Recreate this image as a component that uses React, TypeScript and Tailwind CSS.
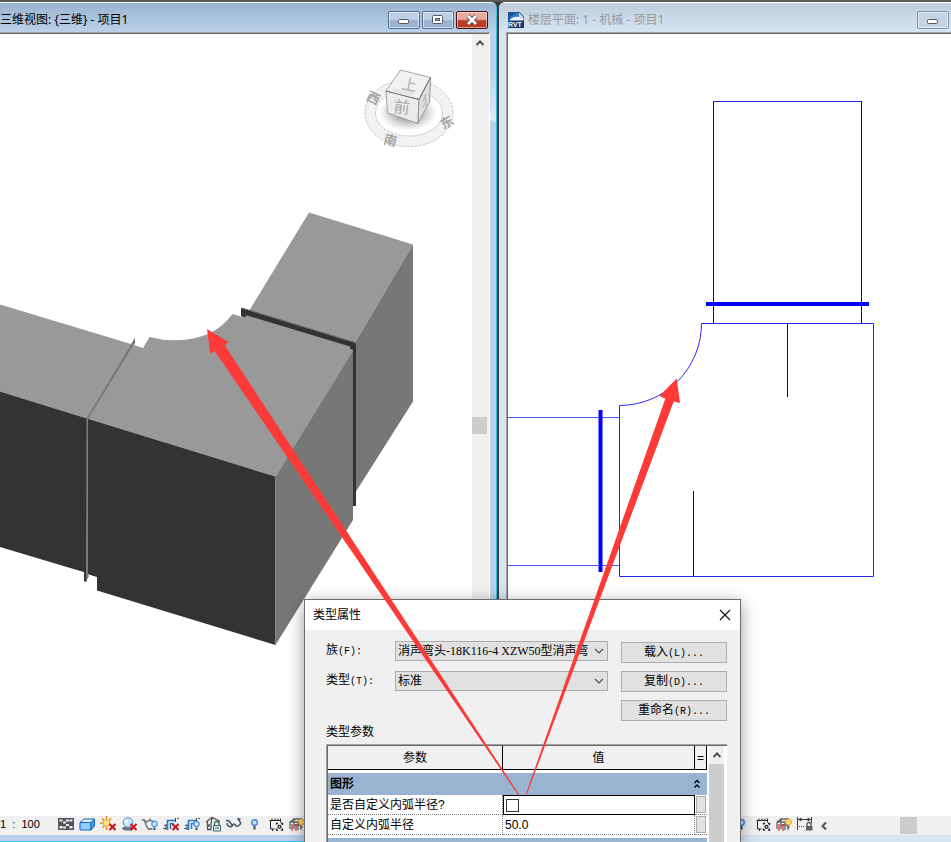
import { ReactNode, useState } from "react";
import clsx from "clsx";

const cjk = "font-['Liberation_Sans','Noto_Sans_CJK_SC',sans-serif]";

function RedCross() {
  return <path d="M9.5 8l6 6M15.5 8l-6 6" stroke="#d01212" strokeWidth="2" />;
}

function SmallBulb() {
  return (
    <>
      <circle cx="12.5" cy="8" r="2.8" fill="#b8e4ff" stroke="#2a78d0" />
      <path d="M11.5 11.5h2v2.5h-2z" fill="#3a4a5c" />
    </>
  );
}

function DuctRun() {
  return (
    <>
      <path d="M0 12.5h3M1 9.5h2M14 2.5h2" fill="none" stroke="#4b5661" strokeWidth="1.2" />
      <path d="M4.5 14V4.5H13M7.5 13V7.500h3" fill="none" stroke="#2f78b8" strokeWidth="1.6" />
      <path d="M3 8v6M12.500 2v4" stroke="#39434d" />
    </>
  );
}

const icons: Record<string, { label: string; drawing: ReactNode }> = {
  detail: {
    label: "详细程度",
    drawing: (
      <>
        <rect x="0" y="2" width="16" height="12" fill="#50555c" />
        <path d="M1.5 3.5h3v2h-3zM11.5 3.5h3v2h-3zM5 5.5h3v2H5zM8 8h3v2H8zM1.5 10h3v2.5h-3zM11.5 10h3v2.5h-3zM5 10.5h3v2H5zM8 3.5h3v2H8z" fill="#e8eaec" />
      </>
    ),
  },
  style: {
    label: "视觉样式",
    drawing: (
      <g stroke="#1565b8" strokeLinejoin="round">
        <path d="M1 6.5L5 3h10.5L12 6.5z" fill="#d9f1ff" />
        <path d="M1 6.5h11V14H1z" fill="#8fd0fa" />
        <path d="M12 6.5L15.5 3v7L12 14z" fill="#4aa3e8" />
      </g>
    ),
  },
  sun: {
    label: "日光路径",
    drawing: (
      <>
        <path d="M6.5 0v3M0 7h2.5M2 2.5l2 2M11 2.5l-2 2M2.5 11.5l2-2M6.5 11v3" stroke="#d98a12" strokeWidth="1.4" />
        <circle cx="6.5" cy="7" r="3.4" fill="#ffe58a" stroke="#eda21c" />
        <RedCross />
      </>
    ),
  },
  shadow: {
    label: "阴影",
    drawing: (
      <>
        <ellipse cx="7" cy="12.5" rx="6" ry="2" fill="#6a727c" />
        <circle cx="7" cy="6.5" r="4.8" fill="#c4e6fb" stroke="#5591c8" />
        <circle cx="5.5" cy="5" r="1.6" fill="#fff" />
        <RedCross />
      </>
    ),
  },
  render: {
    label: "渲染对话框",
    drawing: (
      <>
        <path d="M0 4h2.500l1.500 5 2.500 4h4M4 6.500c1-2.500 7-2.500 8 0M8 2.500v2" fill="none" stroke="#59616b" strokeWidth="1.3" />
        <SmallBulb />
      </>
    ),
  },
  crop: {
    label: "裁剪视图",
    drawing: (
      <>
        <DuctRun />
        <RedCross />
      </>
    ),
  },
  region: {
    label: "裁剪区域",
    drawing: (
      <>
        <DuctRun />
        <SmallBulb />
      </>
    ),
  },
  lock3d: {
    label: "锁定三维视图",
    drawing: (
      <>
        <path d="M1 6l6-4.5L14 5v4M2.500 6v7.500h4M7 2l-1 6v5M4 8v3" fill="none" stroke="#4a5158" strokeWidth="1.3" />
        <path d="M9.500 9V7.500a2 2 0 0 1 4 0" fill="none" stroke="#3f6f68" strokeWidth="1.300" />
        <path d="M8.500 9.500h7V15h-7z" fill="#d5ebe4" stroke="#356c62" />
        <path d="M10 12h4" stroke="#356c62" />
      </>
    ),
  },
  glasses: {
    label: "临时隐藏/隔离",
    drawing: (
      <path d="M0 4.500l3 .5 3 4M1 7c0 4 5 5 6 1.500 1-1 1.500-.5 2 0 1 3 6 1.500 5.500-2L12 3h2.500" fill="none" stroke="#3e4d5e" strokeWidth="1.400" />
    ),
  },
  bulb: {
    label: "显示隐藏的图元",
    drawing: (
      <>
        <circle cx="7.500" cy="6.500" r="2.800" fill="#b8e4ff" stroke="#2a78d0" strokeWidth="1.200" />
        <path d="M6.500 10h2v3.500h-2z" fill="#3a4a5c" />
      </>
    ),
  },
  temp: {
    label: "临时视图属性",
    drawing: (
      <>
        <path d="M1.500 4.500h11v2M2.500 4v9h4M4 2.500v2M7 2.500v2M10 2.500v2M12.500 2.500v2M4.500 13v2" fill="none" stroke="#20252a" />
        <path d="M8.500 8.500v-1h1.500M13 7.500h1.500V9M14.500 12.500V14H13M10 14H8.500v-1.500" fill="none" stroke="#20252a" strokeWidth="1.300" />
        <circle cx="11.500" cy="10.800" r="1.500" fill="none" stroke="#20252a" strokeWidth="1.300" />
      </>
    ),
  },
  analytic: {
    label: "分析模型",
    drawing: (
      <>
        <path d="M1 13V6l4-3h8M1 6h8M5 3v10M9 6v8M12 8v6M5 9h7" fill="none" stroke="#5c636b" strokeWidth="1.300" />
        <path d="M3 8v7M7 8v7" stroke="#c93a32" strokeWidth="1.300" />
        <circle cx="12.500" cy="6" r="3" fill="#ffd76a" stroke="#ee9a1a" />
        <path d="M11.500 10h2v2h-2z" fill="#53606e" />
      </>
    ),
  },
  constraint: {
    label: "显示约束",
    drawing: (
      <>
        <path d="M0 3.500h15M.5 1v13M14.500 1v6M2 3.500l2-1.500v3zM13 3.500L11 2v3z" fill="#3a4047" stroke="#3a4047" />
        <path d="M2 10.500h6" stroke="#3a4047" strokeDasharray="1 1" />
        <path d="M10 10V8.500a2 2 0 0 1 4 0V10" fill="none" stroke="#4c5258" strokeWidth="1.300" />
        <path d="M9 10h6.500v4.500H9z" fill="#5d6369" />
      </>
    ),
  },
};

const icons3d = ["detail", "style", "sun", "shadow", "render", "crop", "region", "lock3d", "glasses", "bulb", "temp", "analytic"];
const iconsPlan = ["detail", "style", "sun", "shadow", "crop", "region", "glasses", "bulb", "temp", "analytic", "constraint"];

function ViewControls({ names }: { names: string[] }) {
  return (
    <div className="flex h-[19px] shrink-0 items-center bg-[#f0f0f0] pb-[3px]">
      <span className="w-[55px] shrink-0 whitespace-pre font-['Liberation_Sans',sans-serif] text-[11px] leading-4">1  :  100</span>
      {names.map((name) => (
        <button key={name} type="button" aria-label={icons[name].label} className="flex w-[21px] shrink-0 justify-center">
          <svg viewBox="0 0 16 16" className="size-4">{icons[name].drawing}</svg>
        </button>
      ))}
    </div>
  );
}

function CaptionButton({ kind, active }: { kind: "min" | "max" | "close"; active: boolean }) {
  return (
    <button
      type="button"
      aria-label={kind}
      className={clsx(
        "flex h-[18px] w-8 shrink-0 items-center justify-center rounded-[2px] border inset-shadow-[0_0_0_1px_rgba(255,255,255,0.5)]",
        kind === "close" && "border-[#4b1319] bg-linear-to-b from-[#e9a99b] from-45% to-[#bb3f27] to-55%",
        kind !== "close" && active && "border-[#54708f] bg-linear-to-b from-[#bcd0e6] from-45% to-[#98b4d2] to-55%",
        kind !== "close" && !active && "border-[#8294ab] bg-[#c6d3e1]"
      )}
    >
      <svg viewBox="0 0 30 16" className="h-4 w-[30px]">
        {kind === "min" && <rect x="9.500" y="7.500" width="10" height="4" rx="1" fill="#fff" stroke="#535666" />}
        {kind === "max" && (
          <>
            <rect x="9.500" y="3.500" width="10" height="8" rx="1" fill="#fff" stroke="#535666" />
            <rect x="12.500" y="6.500" width="4" height="2" fill="#9cb6d3" stroke="#535666" />
          </>
        )}
        {kind === "close" && (
          <>
            <path d="M11 4l8 8M19 4l-8 8" stroke="#4d4a5a" strokeWidth="4.500" />
            <path d="M11 4l8 8M19 4l-8 8" stroke="#fff" strokeWidth="2.600" />
          </>
        )}
      </svg>
    </button>
  );
}

function Chevron({ d, className }: { d: string; className?: string }) {
  return (
    <svg viewBox="0 0 10 10" className={clsx("size-[10px]", className)}>
      <path d={d} fill="none" stroke="#505050" strokeWidth="2" />
    </svg>
  );
}

function ViewCube() {
  return (
    <g className={cjk}>
      <defs>
        <radialGradient id="cubeShadow">
          <stop offset="0.3" stopColor="#777" stopOpacity="0.7" />
          <stop offset="1" stopColor="#999" stopOpacity="0" />
        </radialGradient>
      </defs>
      <ellipse cx="409" cy="113" rx="38.500" ry="28" fill="none" stroke="#f2f2f2" strokeWidth="10" />
      <ellipse cx="409" cy="113" rx="44" ry="33.500" fill="none" stroke="#c2c2c2" strokeDasharray="3 1" />
      <ellipse cx="409" cy="113" rx="33.500" ry="23" fill="none" stroke="#c8c8c8" strokeDasharray="3 1" />
      <ellipse cx="408" cy="113" rx="29" ry="18" fill="url(#cubeShadow)" />
      <path d="M400.500 70L430.500 77.500 419 99.500 386 91z" fill="#f1f1f1" stroke="#a5a5a5" />
      <path d="M386 91L419 99.500 418 123.500 387.500 113z" fill="#ebebeb" stroke="#a0a0a0" />
      <path d="M419 99.500L430.500 77.500 429.500 102 418 123.500z" fill="#dedede" stroke="#969696" />
      <path d="M386 91L419 99.500 430.500 77.500" fill="none" stroke="#777" />
      <path d="M394 88l20 5 -2 4 -20-5z" fill="#e2e4e7" />
      <text x="402" y="90" fontSize="15" fill="#a9a9a9" transform="rotate(12 408 84)">上</text>
      <text x="394" y="113" fontSize="16" fill="#a6a6a6" transform="rotate(6 402 106)">前</text>
      <path d="M423 101l4-8M423 107l4-8M424 112l3-5M425 95l1 12" stroke="#aaa" strokeDasharray="2 1" />
      <g fontSize="13" fontWeight="bold" fill="#a4a4a4">
        <text x="367" y="103" transform="rotate(25 374 98)">西</text>
        <text x="384" y="145" transform="rotate(15 390 140)">南</text>
        <text x="440" y="127" transform="rotate(-30 447 122)">东</text>
      </g>
    </g>
  );
}

function DuctModel() {
  return (
    <svg viewBox="0 34 472 782" className="h-[782px] w-[472px] shrink-0">
      <ViewCube />
      {/* branch duct */}
      <path d="M309 212.500L413 244.500 354 345 249 311z" fill="#999" />
      <path d="M413 244.500V401.500L355 493V343z" fill="#777" />
      {/* left duct */}
      <path d="M0 304.500L131 344 87 418.500 0 391.500z" fill="#999" />
      <path d="M0 391.500L87 418.500V573L0 547z" fill="#333" />
      {/* elbow */}
      <path d="M87 418.500L131 344 143 348 149.500 337Q180 345 208 334 223 327 232.500 314L244 317.500 250 314 353 346V352L275.500 476.500z" fill="#999" />
      <path d="M87 418.500L275.500 476.500V645L97 590.500V577L87 574z" fill="#333" />
      <path d="M275.500 476.500L353 351V520L275.500 645z" fill="#777" />
      {/* flanges */}
      <path d="M241 308L355.500 343V350L350 349V346.500L247 315.500 244.500 317.500 241 316z" fill="#333" />
      <path d="M242 308L355 342.500" stroke="#666" />
      <path d="M353 344h3v162h-3z" fill="#333" />
      <path d="M86.500 418.500L133.500 340 135 338V345.500L134 344 88 419z" fill="#777" />
      <path d="M84 571h3v10.500h-3z" fill="#333" />
      <path d="M86.500 418h1.500v157l1 1-3 6z" fill="#7c7c7c" />
    </svg>
  );
}

function FloorPlan() {
  return (
    <svg viewBox="508 34 443 782" className="h-[782px] w-[443px] shrink-0" fill="none" strokeWidth="1">
      <path d="M713.500 323V101.500M861.500 101V323M787.500 323v74M693.500 491v86" stroke="#0000c8" />
      <path d="M713 101.500h149" stroke="#2020e8" />
      <path d="M508 417.500h111M508 565.500h111" stroke="#5050ff" />
      <path d="M701.500 323.500H873.500V576.500H619.500V405.500A82 82 0 0 0 701.500 323.500" stroke="#2828f4" />
      <path d="M706 304h163M600.500 410v162" stroke="#0000ff" strokeWidth="4" />
    </svg>
  );
}

function ModelWindow() {
  return (
    <section className={clsx(cjk, "flex min-w-0 flex-col overflow-hidden rounded-tr-[6px] border-t border-r border-b border-t-white border-r-[#2cc6e4] border-b-[#2cc6e4] bg-[#b9d1ea]")}>
      <header className="flex h-[29px] shrink-0 items-center justify-between bg-linear-to-b from-[#9ab4d1] to-[#b9d1ea] pt-1 pr-2">
        <h1 className="pt-px font-['Noto_Sans','Noto_Sans_CJK_SC',sans-serif] text-[12px] leading-4 whitespace-nowrap text-black">三维视图: {"{三维}"} - 项目1</h1>
        <div className="flex gap-[2px]">
          <CaptionButton kind="min" active />
          <CaptionButton kind="max" active />
          <CaptionButton kind="close" active />
        </div>
      </header>
      <div className="flex min-h-0 flex-1 bg-[linear-gradient(#b9d1ea_38px,#dde9f6_88px,#b9d1ea_90px)] pr-[6px] pb-[6px]">
        <div className="flex min-w-0 flex-1 flex-col border-t border-[#a0a0a0] bg-white pr-px">
          <div className="flex min-h-0 flex-1 border-t border-[#696969]">
            <div className="min-w-0 flex-1 overflow-hidden">
              <DuctModel />
            </div>
            <div className="flex w-[17px] shrink-0 flex-col items-start bg-[#f0f0f0]">
              <Chevron d="M1.500 7L5 3.500 8.500 7" className="mt-1 ml-[3px] shrink-0" />
              <div className="mt-[369px] h-[17px] w-[15px] bg-[#cdcdcd]" />
            </div>
          </div>
          <ViewControls names={icons3d} />
        </div>
      </div>
    </section>
  );
}

function PlanWindow() {
  return (
    <section className={clsx(cjk, "flex min-w-0 flex-col overflow-hidden rounded-tl-[6px] border-t border-t-white bg-[#d7e4f1]")}>
      <header className="flex h-[29px] shrink-0 items-center justify-between bg-linear-to-b from-[#bfcddb] to-[#d7e4f1] pt-1 pr-[2px] pl-[9px]">
        <div className="flex items-center gap-1 pt-px">
          <svg viewBox="0 0 16 16" className="size-4">
            <path d="M0 0h11.500L16 4.500V16H0z" fill="#12376b" />
            <path d="M.5.5h10.500v5Q7 4 3 8.500H.5z" fill="#2f7cc4" />
            <path d="M1 1h8Q3 3 1 7z" fill="#14508f" />
            <path d="M1.500 8.500Q5 4 11 5l4.500.5V8.500z" fill="#eef5fc" />
            <path d="M11 .5l4.500 4.500H11z" fill="#c8dff5" />
            <text x="0" y="15" fontSize="7" fontWeight="bold" fill="#fff">RVT</text>
          </svg>
          <h1 className="font-['Noto_Sans','Noto_Sans_CJK_SC',sans-serif] text-[12px] leading-4 whitespace-nowrap text-[#9a9a9a]">楼层平面: 1 - 机械 - 项目1</h1>
        </div>
        <CaptionButton kind="min" active={false} />
      </header>
      <div className="flex min-h-0 flex-1 pb-[7px] pl-[7px]">
        <div className="flex min-w-0 flex-1 border-t border-l border-[#a0a0a0]">
          <div className="flex min-w-0 flex-1 flex-col border-t border-l border-[#696969] bg-white">
            <div className="min-h-0 flex-1 overflow-hidden">
              <FloorPlan />
            </div>
            <div className="flex shrink-0 items-center bg-[#f0f0f0] pl-[21px]">
              <ViewControls names={iconsPlan} />
              <Chevron d="M7 1.500L3.500 5 7 8.500" className="ml-1 shrink-0" />
              <div className="ml-[71px] h-[17px] w-[17px] shrink-0 bg-[#cdcdcd]" />
            </div>
          </div>
        </div>
      </div>
    </section>
  );
}

// Latin part of the dialog captions is set narrower than the Chinese part
function Caption({ text, hint }: { text: string; hint: string }) {
  return (
    <>
      {text}
      <span className="font-['Liberation_Mono',monospace] text-[10px]">{hint}</span>
    </>
  );
}

function ComboBox({ id, text, hint, options }: { id: string; text: string; hint: string; options: string[] }) {
  return (
    <div className="flex h-5 items-center">
      <label htmlFor={id} className="w-[69px] shrink-0"><Caption text={text} hint={hint} /></label>
      <div className="relative flex min-w-0 flex-1">
        <select
          id={id}
          className="h-5 w-full appearance-none border border-[#adadad] bg-[#e1e1e1] pr-[18px] pl-[2px] font-['Liberation_Serif','Noto_Sans_CJK_SC',serif] text-[12px] leading-4"
        >
          {options.map((option) => (
            <option key={option}>{option}</option>
          ))}
        </select>
        <svg viewBox="0 0 10 10" className="pointer-events-none absolute top-[5px] right-1 size-[10px]">
          <path d="M1 3l4 4 4-4" fill="none" stroke="#505050" strokeWidth="1.200" />
        </svg>
      </div>
    </div>
  );
}

function PushButton({ text, hint }: { text: string; hint: string }) {
  return (
    <button type="button" className="h-[21px] w-full border border-[#adadad] bg-[#e1e1e1] leading-4">
      <Caption text={text} hint={hint} />
    </button>
  );
}

function TypeDialog() {
  const [custom, setCustom] = useState(false);
  const [radius, setRadius] = useState("50.0");

  return (
    <section
      role="dialog"
      aria-labelledby="dialogTitle"
      className={clsx(cjk, "absolute top-[599px] bottom-0 left-[304px] flex w-[437px] flex-col overflow-hidden border border-b-0 border-[#6b6b6b] bg-[#f0f0f0] text-[12px] leading-4 text-black shadow-[0_4px_16px_rgba(0,0,0,0.4)]")}
    >
      <header className="flex h-[30px] shrink-0 items-center justify-between bg-white pr-[9px] pl-2">
        <h2 id="dialogTitle">类型属性</h2>
        <button type="button" aria-label="关闭">
          <svg viewBox="0 0 12 12" className="size-3">
            <path d="M1 1l10 10M11 1L1 11" stroke="#111" strokeWidth="1.200" />
          </svg>
        </button>
      </header>

      <div className="shrink-0 pr-[13px] pl-[21px]">
        <div className="flex gap-[13px]">
          <div className="flex min-w-0 flex-1 flex-col gap-[10px] pt-[11px]">
            <ComboBox id="family" text="族" hint="(F):" options={["消声弯头-18K116-4 XZW50型消声弯头"]} />
            <ComboBox id="type" text="类型" hint="(T):" options={["标准"]} />
          </div>
          <div className="flex w-[106px] shrink-0 flex-col gap-2 pt-3">
            <PushButton text="载入" hint="(L)..." />
            <PushButton text="复制" hint="(D)..." />
            <PushButton text="重命名" hint="(R)..." />
          </div>
        </div>
        <p className="mt-[3px] mb-1">类型参数</p>

        <div className="flex border-t border-l border-[#a0a0a0]">
          <div className="flex w-full border-t border-l border-[#696969] bg-white">
            <table className="min-w-0 flex-1 table-fixed border-separate border-spacing-0">
              <colgroup>
                <col className="w-[175px]" />
                <col />
                <col className="w-[12px]" />
              </colgroup>
              <thead>
                <tr className="h-6 bg-[#f0f0f0]">
                  <th className="border-r border-b border-black p-0 font-normal">参数</th>
                  <th className="border-r border-b border-black p-0 font-normal">值</th>
                  <th className="border-r border-b border-black p-0 font-normal">=</th>
                </tr>
              </thead>
              <tbody>
                <tr className="h-[3px]"><td colSpan={3} className="p-0" /></tr>
                <tr className="h-[22px] bg-[#99b4d1]">
                  <th colSpan={3} className="p-0 pr-[6px] pl-[2px]">
                    <div className="flex items-center justify-between">
                      图形
                      <svg viewBox="0 0 8 10" className="h-[10px] w-2">
                        <path d="M1.500 4L4 1.500 6.500 4M1.500 8.500L4 6l2.500 2.500" fill="none" stroke="#000" strokeWidth="1.400" />
                      </svg>
                    </div>
                  </th>
                </tr>
                <tr className="h-5">
                  <td className="border-r border-b border-dotted border-[#777] p-0 pl-[2px] whitespace-nowrap">
                    <label htmlFor="custom">是否自定义内弧半径?</label>
                  </td>
                  <td className="border border-black p-0">
                    <input
                      id="custom"
                      type="checkbox"
                      checked={custom}
                      onChange={(e) => setCustom(e.target.checked)}
                      className="ml-[2px] block size-[13px] appearance-none border border-[#333] bg-white checked:bg-[#333]"
                    />
                  </td>
                  <td className="border-b border-dotted border-[#777] p-0">
                    <button type="button" aria-label="关联参数" className="mx-px block h-[17px] w-[10px] border border-[#adadad] bg-[#e1e1e1]" />
                  </td>
                </tr>
                <tr className="h-5">
                  <td className="border-r border-b border-dotted border-[#777] p-0 pl-[2px] whitespace-nowrap">
                    <label htmlFor="radius">自定义内弧半径</label>
                  </td>
                  <td className="border-r border-b border-dotted border-[#777] p-0 pl-[2px]">
                    <input
                      id="radius"
                      type="text"
                      value={radius}
                      onChange={(e) => setRadius(e.target.value)}
                      className="block h-4 w-full outline-none"
                    />
                  </td>
                  <td className="border-b border-dotted border-[#777] p-0">
                    <button type="button" aria-label="关联参数" className="mx-px block h-[17px] w-[10px] border border-[#adadad] bg-[#e1e1e1]" />
                  </td>
                </tr>
                <tr className="h-[3px]"><td colSpan={3} className="p-0" /></tr>
                <tr className="h-[22px] bg-[#99b4d1]"><td colSpan={3} className="p-0" /></tr>
              </tbody>
            </table>
            <div className="mr-[3px] ml-[2px] flex w-[15px] shrink-0 flex-col items-center bg-[#f0f0f0]">
              <Chevron d="M1.500 7L5 3.500 8.500 7" className="my-1 shrink-0" />
              <div className="w-full flex-1 bg-[#cdcdcd]" />
            </div>
          </div>
        </div>
      </div>
    </section>
  );
}

export default function App() {
  return (
    <main className="relative grid h-screen grid-cols-[minmax(0,497fr)_minmax(0,452fr)] gap-[2px] overflow-hidden border-t-2 border-[#5c5c56] bg-[#3a3a3a]">
      <ModelWindow />
      <PlanWindow />
      <div className="pointer-events-none absolute inset-x-0 -top-[2px] bottom-0 overflow-hidden">
        <div className="pointer-events-auto">
          <TypeDialog />
        </div>
        {/* callout arrows from the check box to the inner arc in both views */}
        <svg viewBox="0 0 951 842" className="absolute top-0 left-0 h-[842px] w-[951px]" fill="#fc3a38">
          <path d="M207 329L228.700 342.300 224.700 345.300 519.500 795 518.500 795.500 214.700 351 210.300 354z" />
          <path d="M676.700 378.500L680 403 673.700 401.500 527 794 526 793.500 665.300 398.700 659.300 396z" />
        </svg>
      </div>
    </main>
  );
}
